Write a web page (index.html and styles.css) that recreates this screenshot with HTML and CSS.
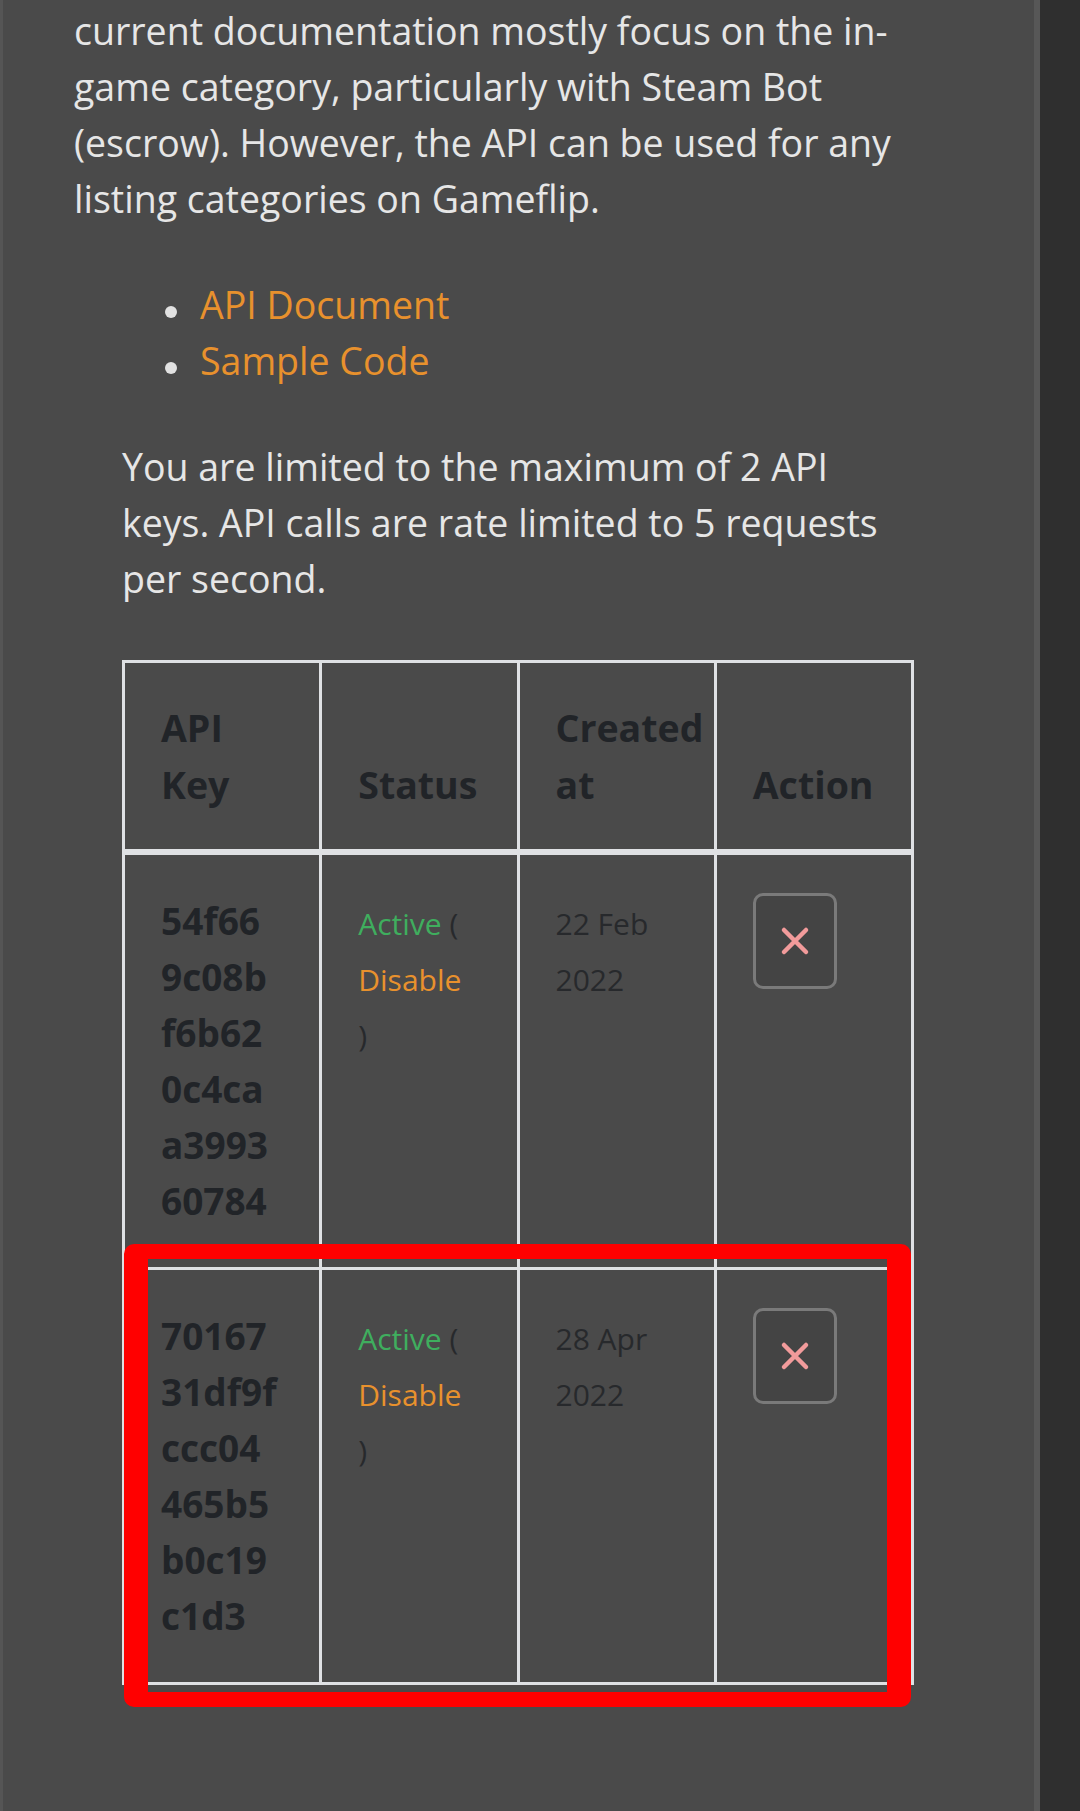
FILE: index.html
```html
<!DOCTYPE html>
<html lang="en">
<head>
<meta charset="utf-8">
<title>API Keys</title>
<link rel="stylesheet" href="styles.css">
</head>
<body>
<div class="page">
  <main class="content">
    <p class="intro">current documentation mostly focus on the in-game category, particularly with Steam Bot (escrow). However, the API can be used for any listing categories on Gameflip.</p>
    <ul class="links">
      <li><a href="#">API Document</a></li>
      <li><a href="#">Sample Code</a></li>
    </ul>
    <section class="keys">
      <p class="limit">You are limited to the maximum of 2 API keys. API calls are rate limited to 5 requests per second.</p>
      <div class="table-wrap">
        <table class="key-table">
          <thead>
            <tr>
              <th>API Key</th>
              <th>Status</th>
              <th>Created at</th>
              <th>Action</th>
            </tr>
          </thead>
          <tbody>
            <tr>
              <td><span class="key">54f669c08bf6b620c4caa399360784</span></td>
              <td><span class="small"><span class="ok">Active</span> ( <a href="#" class="disable">Disable</a> )</span></td>
              <td><span class="small">22 Feb 2022</span></td>
              <td>
                <button class="btn-del" type="button" aria-label="Delete">
                  <svg width="30" height="30" viewBox="0 0 30 30"><path d="M4 4 L26 26 M26 4 L4 26" stroke="#f29b9b" stroke-width="4.5" stroke-linecap="round" fill="none"/></svg>
                </button>
              </td>
            </tr>
            <tr>
              <td><span class="key">7016731df9fccc04465b5b0c19c1d3</span></td>
              <td><span class="small"><span class="ok">Active</span> ( <a href="#" class="disable">Disable</a> )</span></td>
              <td><span class="small">28 Apr 2022</span></td>
              <td>
                <button class="btn-del" type="button" aria-label="Delete">
                  <svg width="30" height="30" viewBox="0 0 30 30"><path d="M4 4 L26 26 M26 4 L4 26" stroke="#f29b9b" stroke-width="4.5" stroke-linecap="round" fill="none"/></svg>
                </button>
              </td>
            </tr>
          </tbody>
        </table>
        <div class="highlight"></div>
      </div>
    </section>
  </main>
  <aside class="rail"></aside>
</div>
</body>
</html>
```

FILE: styles.css
```css
html, body {
  margin: 0;
  padding: 0;
}

body {
  background: #2f2f2f;
  font-family: "Open Sans", "Noto Sans", sans-serif;
  font-size: 37.5px;
  color: #e6e6e6;
}

.page {
  display: flex;
  min-height: 1811px;
}

.content {
  width: 1040px;
  box-sizing: border-box;
  background: #4a4a4a;
  border-left: 3px solid #555555;
  border-right: 6px solid #575757;
  padding: 3px 72px 0 71px;
}

.rail {
  flex: 1;
  background: #2f2f2f;
}

.intro {
  margin: 0 0 50px;
  line-height: 56px;
}

.links {
  list-style: none;
  margin: 0 0 50px;
  padding: 0 0 0 126px;
  line-height: 56px;
}

.links li {
  position: relative;
}

.links li::before {
  content: "";
  position: absolute;
  left: -35px;
  top: 29px;
  width: 12px;
  height: 12px;
  border-radius: 50%;
  background: #e2e2e2;
}

.links a {
  color: #e8912d;
  text-decoration: none;
}

.keys {
  margin: 0 48px;
}

.limit {
  margin: 0 0 53px;
  line-height: 56px;
}

.table-wrap {
  position: relative;
}

.key-table {
  width: 100%;
  table-layout: fixed;
  border-collapse: separate;
  border-spacing: 0;
  border-top: 3px solid #dfe1e4;
  border-left: 3px solid #dfe1e4;
  color: #212428;
}

.key-table th,
.key-table td {
  border-right: 3px solid #dfe1e4;
  border-bottom: 3px solid #dfe1e4;
  padding: 38px 42px 38px 36px;
  text-align: left;
  vertical-align: top;
  font-size: 37px;
  line-height: 56px;
}

.key-table th {
  vertical-align: bottom;
  font-weight: 700;
  font-size: 37.5px;
  line-height: 57px;
  padding-top: 36px;
  padding-bottom: 36px;
  border-bottom-width: 6px;
}

.key {
  display: block;
  font-weight: 700;
  word-break: break-all;
}

.small {
  font-size: 30px;
  line-height: 1;
  color: #27292c;
}

.ok {
  color: #3fae5e;
}

.disable {
  color: #e8912d;
  text-decoration: none;
}

.btn-del {
  display: flex;
  align-items: center;
  justify-content: center;
  width: 84px;
  height: 96px;
  padding: 0;
  box-sizing: border-box;
  border: 3px solid #7a7a7a;
  border-radius: 10px;
  background: #444444;
}

.highlight {
  position: absolute;
  left: 2px;
  right: 3px;
  bottom: -22px;
  height: 463px;
  box-sizing: border-box;
  border-style: solid;
  border-color: #ff0000;
  border-width: 15px 24px;
  border-radius: 10px;
  pointer-events: none;
}
```
